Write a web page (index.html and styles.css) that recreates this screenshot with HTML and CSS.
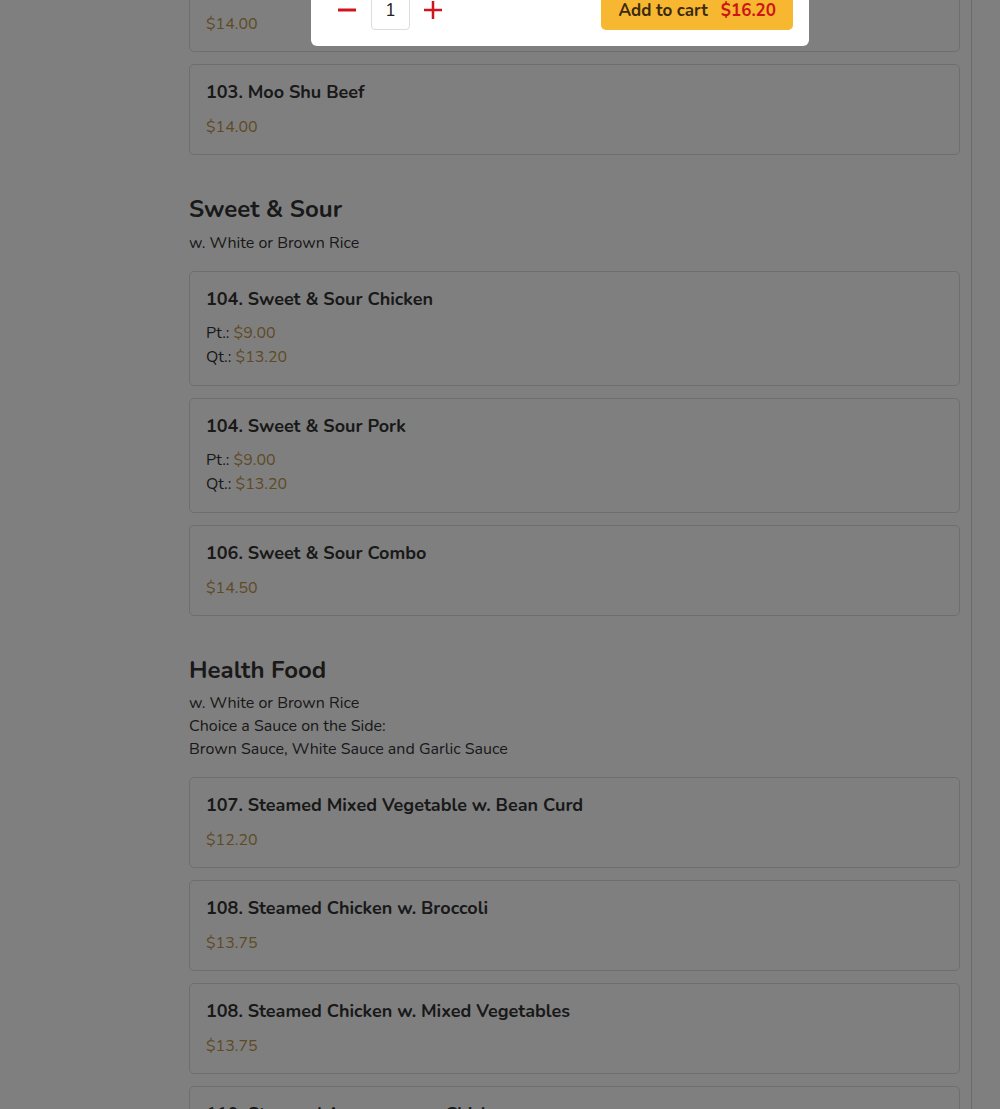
FILE: index.html
```html
<!DOCTYPE html>
<html lang="en">
<head>
<meta charset="utf-8">
<title>Menu</title>
<link rel="stylesheet" href="styles.css">
</head>
<body>
<div class="page">
  <aside class="left"></aside>
  <main class="main">
    <div class="list list-first">
      <div class="card">
        <div class="title">102. Moo Shu Pork</div>
        <div class="price">$14.00</div>
      </div>
      <div class="card">
        <div class="title">103. Moo Shu Beef</div>
        <div class="price">$14.00</div>
      </div>
    </div>

    <section class="section">
      <h2 class="sec-title">Sweet &amp; Sour</h2>
      <p class="sec-desc">w. White or Brown Rice</p>
      <div class="list">
        <div class="card">
          <div class="title">104. Sweet &amp; Sour Chicken</div>
          <div class="prices">
            <div class="line">Pt.: <span class="amt">$9.00</span></div>
            <div class="line">Qt.: <span class="amt">$13.20</span></div>
          </div>
        </div>
        <div class="card">
          <div class="title">104. Sweet &amp; Sour Pork</div>
          <div class="prices">
            <div class="line">Pt.: <span class="amt">$9.00</span></div>
            <div class="line">Qt.: <span class="amt">$13.20</span></div>
          </div>
        </div>
        <div class="card">
          <div class="title">106. Sweet &amp; Sour Combo</div>
          <div class="price">$14.50</div>
        </div>
      </div>
    </section>

    <section class="section section-health">
      <h2 class="sec-title">Health Food</h2>
      <p class="sec-desc">w. White or Brown Rice<br>Choice a Sauce on the Side:<br>Brown Sauce, White Sauce and Garlic Sauce</p>
      <div class="list">
        <div class="card">
          <div class="title">107. Steamed Mixed Vegetable w. Bean Curd</div>
          <div class="price">$12.20</div>
        </div>
        <div class="card">
          <div class="title">108. Steamed Chicken w. Broccoli</div>
          <div class="price">$13.75</div>
        </div>
        <div class="card">
          <div class="title">108. Steamed Chicken w. Mixed Vegetables</div>
          <div class="price">$13.75</div>
        </div>
        <div class="card">
          <div class="title">110. Steamed Asparagus w. Chicken</div>
          <div class="price">$13.75</div>
        </div>
      </div>
    </section>
  </main>
  <aside class="right"></aside>
</div>

<div class="overlay"></div>

<div class="modal">
  <div class="modal-footer">
    <div class="qty">
      <button class="qty-btn" aria-label="Decrease">
        <svg width="18" height="18" viewBox="0 0 18 18"><path d="M0 9H18" stroke="#d0141c" stroke-width="3"/></svg>
      </button>
      <div class="qty-input">1</div>
      <button class="qty-btn" aria-label="Increase">
        <svg width="18" height="18" viewBox="0 0 18 18"><path d="M0 9H18M9 0V18" stroke="#d0141c" stroke-width="2.5"/></svg>
      </button>
    </div>
    <button class="add-btn"><span class="add-label">Add to cart</span><span class="add-price">$16.20</span></button>
  </div>
</div>
</body>
</html>
```
FILE: styles.css
```css
* { box-sizing: border-box; }
html, body { margin: 0; padding: 0; }
body {
  background: #ffffff;
  color: #333333;
  font-family: "Nunito", "Lato", "Noto Sans", sans-serif;
  overflow: hidden;
}
.page {
  display: flex;
  min-height: 1109px;
}
.left { width: 189px; flex: none; }
.main { width: 771px; flex: none; }
.right {
  flex: 1;
  margin-left: 11px;
  border-left: 1px solid #d4d4d4;
}
.list {
  display: flex;
  flex-direction: column;
  gap: 12px;
}
.list-first { margin-top: -39px; }
.card {
  border: 1px solid #dcdcdc;
  border-radius: 5px;
  padding: 17px 16px 15px;
}
.title {
  font-size: 18px;
  font-weight: 700;
  line-height: 21px;
  color: #333333;
}
.price {
  margin-top: 12px;
  font-size: 16px;
  line-height: 24px;
  color: #c0954a;
}
.prices { margin: 11px 0 1px; }
.line {
  font-size: 16px;
  line-height: 24px;
  color: #333333;
}
.amt { color: #c0954a; }
.section { margin-top: 39px; }
.sec-title {
  margin: 0 0 7px;
  font-size: 24px;
  font-weight: 700;
  line-height: 31px;
  color: #333333;
}
.section-health .sec-title { margin-bottom: 6px; }
.sec-desc {
  margin: 0 0 16px;
  font-size: 16px;
  line-height: 23px;
  color: #333333;
}
.overlay {
  position: fixed;
  inset: 0;
  background: rgba(0, 0, 0, 0.5);
}
.modal {
  position: fixed;
  left: 311px;
  width: 498px;
  bottom: calc(100% - 46px);
  background: #ffffff;
  border-radius: 0 0 6px 6px;
}
.modal-footer {
  display: flex;
  align-items: center;
  justify-content: space-between;
  padding: 0 16px 16px 27px;
}
.qty {
  display: flex;
  align-items: center;
  gap: 14px;
}
.qty-btn {
  border: 0;
  background: none;
  padding: 0;
  width: 18px;
  height: 18px;
  display: flex;
  align-items: center;
  justify-content: center;
}
.qty-btn:first-child { margin-right: 1px; }
.qty-input {
  width: 39px;
  height: 40px;
  border: 1px solid #dddddd;
  border-radius: 4px;
  display: flex;
  align-items: center;
  justify-content: center;
  font-size: 18px;
  color: #222222;
}
.add-btn {
  display: flex;
  align-items: center;
  gap: 13px;
  height: 40px;
  padding: 0 17px;
  border: 0;
  border-radius: 5px;
  background: #f7b731;
  font-family: inherit;
  font-size: 17px;
  font-weight: 700;
  cursor: pointer;
}
.add-label { color: #3b2a10; }
.add-price { color: #cc1515; }
```
